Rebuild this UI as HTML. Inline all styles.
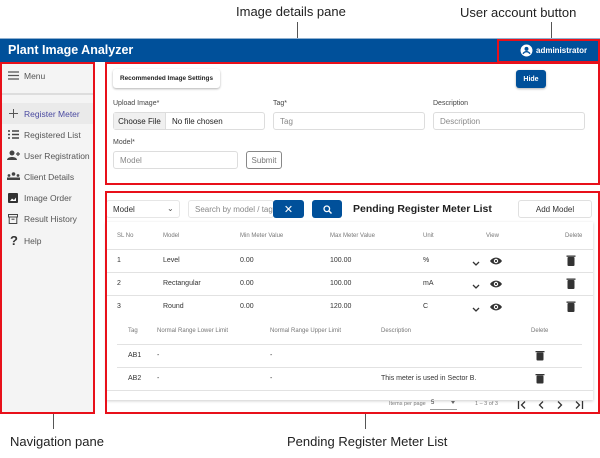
<!DOCTYPE html>
<html><head><meta charset="utf-8">
<style>
*{box-sizing:border-box;margin:0;padding:0}
body{width:600px;height:458px;background:#fff;font-family:"Liberation Sans",Arial,sans-serif;position:relative;overflow:hidden;color:#333}
.a{position:absolute}
.ann{position:absolute;font-size:13px;color:#222;white-space:nowrap}
.vl{position:absolute;width:1px;background:#555}
.red{position:absolute;border:2px solid #e8101a}
.t{position:absolute;font-size:7px;color:#333;white-space:nowrap}
.h{position:absolute;font-size:6px;color:#777;white-space:nowrap}
.nav{position:absolute;left:24px;font-size:8.5px;color:#555}
.inp{position:absolute;border:1px solid #ddd;border-radius:3px;background:#fff;font-size:8px;color:#888;padding-left:6px;display:flex;align-items:center}
.lbl{position:absolute;font-size:7px;color:#444}
.hr{position:absolute;height:1px;background:#e2e2e2}
.btn{position:absolute;border-radius:3px;display:flex;align-items:center;justify-content:center;font-size:7.5px}
</style></head><body>
<div class="ann" style="left:236px;top:4px">Image details pane</div>
<div class="ann" style="left:460px;top:5px">User account button</div>
<div class="vl" style="left:297px;top:22px;height:40px"></div>
<div class="vl" style="left:551px;top:22px;height:17px"></div>
<div class="a" style="left:0;top:38px;width:600px;height:1px;background:#8fb0d0"></div>
<div class="a" style="left:0;top:39px;width:600px;height:23px;background:#00509a"></div>
<div class="a" style="left:8px;top:43px;color:#fff;font-weight:bold;font-size:12.5px">Plant Image Analyzer</div>
<svg class="a" style="left:520px;top:44px" width="13" height="13" viewBox="0 0 24 24"><circle cx="12" cy="12" r="11" fill="#fff"/><circle cx="12" cy="9" r="3.6" fill="#00509a"/><path d="M5.5 18c2-3 4-3.8 6.5-3.8s4.5.8 6.5 3.8" stroke="#00509a" stroke-width="2.6" fill="none"/></svg>
<div class="a" style="left:536px;top:46px;color:#fff;font-weight:bold;font-size:8px">administrator</div>
<div class="red" style="left:497px;top:39px;width:103px;height:24px"></div>

<div class="a" style="left:0;top:62px;width:95px;height:351px;background:#f4f4f4"></div>
<div class="a" style="left:0;top:103px;width:93px;height:21px;background:#eaeaea"></div>
<div class="hr" style="left:2px;top:93px;width:91px;background:#ddd;height:2px"></div>
<svg class="a" style="left:8px;top:71px" width="11" height="9"><path d="M0 1h11M0 4.5h11M0 8h11" stroke="#555" stroke-width="1.3"/></svg>
<div class="nav" style="top:71px">Menu</div>
<svg class="a" style="left:9px;top:109px" width="9" height="9"><path d="M4.5 0v9M0 4.5h9" stroke="#555" stroke-width="1"/></svg>
<div class="nav" style="top:109px;color:#4a4aa0">Register Meter</div>
<svg class="a" style="left:8px;top:130px" width="11" height="9"><path d="M0 1h2M4 1h7M0 4.5h2M4 4.5h7M0 8h2M4 8h7" stroke="#444" stroke-width="1.4"/></svg>
<div class="nav" style="top:130px">Registered List</div>
<svg class="a" style="left:7px;top:150px" width="13" height="10"><circle cx="5" cy="3" r="2.5" fill="#444"/><path d="M0 10c0-4 10-4 10 0z" fill="#444"/><path d="M9 4h4M11 2v4" stroke="#444" stroke-width="1.2"/></svg>
<div class="nav" style="top:151px">User Registration</div>
<svg class="a" style="left:7px;top:172px" width="13" height="8"><circle cx="6.5" cy="2" r="1.8" fill="#444"/><circle cx="2" cy="3.5" r="1.4" fill="#444"/><circle cx="11" cy="3.5" r="1.4" fill="#444"/><rect x="0" y="5.5" width="13" height="2.5" fill="#444"/></svg>
<div class="nav" style="top:172px">Client Details</div>
<svg class="a" style="left:8px;top:193px" width="10" height="10"><rect width="10" height="10" rx="1" fill="#333"/><path d="M2 8l2-2.5 2 1.5 2-2.5v3.5z" fill="#fff"/></svg>
<div class="nav" style="top:193px">Image Order</div>
<svg class="a" style="left:8px;top:214px" width="10" height="10"><rect x="0.5" y="0.5" width="9" height="2.5" fill="none" stroke="#444"/><rect x="1.2" y="3" width="7.6" height="6.5" fill="none" stroke="#444"/><path d="M3.5 5.2h3" stroke="#444"/></svg>
<div class="nav" style="top:214px">Result History</div>
<div class="a" style="left:10px;top:233px;font-size:13px;font-weight:bold;color:#333">?</div>
<div class="nav" style="top:236px">Help</div>
<div class="red" style="left:0;top:62px;width:95px;height:352px"></div>
<div class="vl" style="left:53px;top:414px;height:15px"></div>
<div class="ann" style="left:10px;top:434px">Navigation pane</div>

<div class="btn" style="left:113px;top:69px;width:107px;height:19px;background:#fff;box-shadow:0 1px 2px rgba(0,0,0,.3);color:#222;font-weight:bold;font-size:6.4px">Recommended Image Settings</div>
<div class="btn" style="left:516px;top:70px;width:30px;height:18px;background:#00509a;color:#fff;font-weight:bold;font-size:7px;box-shadow:0 1px 2px rgba(0,0,0,.3)">Hide</div>
<div class="lbl" style="left:113px;top:100px">Upload Image*</div>
<div class="lbl" style="left:273px;top:100px">Tag*</div>
<div class="lbl" style="left:433px;top:100px">Description</div>
<div class="inp" style="left:113px;top:112px;width:152px;height:18px;padding:0;color:#222">
<div style="width:52px;height:100%;background:#f0f0f0;border-right:1px solid #ddd;display:flex;align-items:center;justify-content:center">Choose File</div><div style="padding-left:6px">No file chosen</div></div>
<div class="inp" style="left:273px;top:112px;width:152px;height:18px">Tag</div>
<div class="inp" style="left:433px;top:112px;width:152px;height:18px">Description</div>
<div class="lbl" style="left:113px;top:139px">Model*</div>
<div class="inp" style="left:113px;top:151px;width:125px;height:18px">Model</div>
<div class="btn" style="left:246px;top:151px;width:36px;height:18px;border:1px solid #888;color:#777;font-size:8px">Submit</div>
<div class="red" style="left:105px;top:62px;width:495px;height:123px"></div>

<div class="inp" style="left:106px;top:200px;width:74px;height:18px;color:#333;border-color:#e6e6e6">Model<span style="position:absolute;left:60px;top:3px;font-size:8px;color:#555">⌄</span></div>
<div class="inp" style="left:188px;top:200px;width:86px;height:18px;border-color:#e6e6e6">Search by model / tag</div>
<div class="btn" style="left:273px;top:200px;width:31px;height:18px;background:#00509a;color:#fff;font-size:11px">✕</div>
<div class="btn" style="left:312px;top:200px;width:30px;height:18px;background:#00509a"><svg width="9" height="9"><circle cx="3.8" cy="3.8" r="2.8" stroke="#fff" stroke-width="1.3" fill="none"/><path d="M6 6l2.5 2.5" stroke="#fff" stroke-width="1.4"/></svg></div>
<div class="a" style="left:353px;top:203px;font-weight:bold;font-size:10.5px;color:#222">Pending Register Meter List</div>
<div class="btn" style="left:518px;top:200px;width:74px;height:18px;border:1px solid #e0e0e0;color:#333;font-size:8px">Add Model</div>
<div class="a" style="left:106px;top:222px;width:487px;height:178px;box-shadow:0 1px 3px rgba(0,0,0,.2)"></div>

<div class="h" style="left:117px;top:233px">SL No</div>
<div class="h" style="left:163px;top:233px">Model</div>
<div class="h" style="left:240px;top:233px">Min Meter Value</div>
<div class="h" style="left:330px;top:233px">Max Meter Value</div>
<div class="h" style="left:423px;top:233px">Unit</div>
<div class="h" style="left:486px;top:233px">View</div>
<div class="h" style="left:565px;top:233px">Delete</div>
<div class="hr" style="left:106px;top:249px;width:487px"></div>
<div class="hr" style="left:106px;top:272px;width:487px"></div>
<div class="hr" style="left:106px;top:295px;width:487px"></div>

<div class="t" style="left:117px;top:257px">1</div><div class="t" style="left:163px;top:257px">Level</div><div class="t" style="left:240px;top:257px">0.00</div><div class="t" style="left:330px;top:257px">100.00</div><div class="t" style="left:423px;top:257px">%</div>
<div class="t" style="left:117px;top:280px">2</div><div class="t" style="left:163px;top:280px">Rectangular</div><div class="t" style="left:240px;top:280px">0.00</div><div class="t" style="left:330px;top:280px">100.00</div><div class="t" style="left:423px;top:280px">mA</div>
<div class="t" style="left:117px;top:303px">3</div><div class="t" style="left:163px;top:303px">Round</div><div class="t" style="left:240px;top:303px">0.00</div><div class="t" style="left:330px;top:303px">120.00</div><div class="t" style="left:423px;top:303px">C</div>

<svg class="a" style="left:470px;top:254px" width="140" height="60">
<g id="r"><path d="M3 8l3 3 3-3" stroke="#333" stroke-width="1.3" fill="none"/><path d="M20 7c3-4.5 9-4.5 12 0c-3 4.5-9 4.5-12 0z" fill="#333"/><circle cx="26" cy="7" r="2.2" fill="#fff"/><circle cx="26" cy="7" r="1.1" fill="#333"/><rect x="97.5" y="3" width="7" height="9" rx="1" fill="#333"/><rect x="96.5" y="1.5" width="9" height="1.3" fill="#333"/></g>
<use href="#r" y="23"/><use href="#r" y="46"/>
</svg>

<div class="h" style="left:128px;top:328px">Tag</div>
<div class="h" style="left:157px;top:328px">Normal Range Lower Limit</div>
<div class="h" style="left:270px;top:328px">Normal Range Upper Limit</div>
<div class="h" style="left:381px;top:328px">Description</div>
<div class="h" style="left:531px;top:328px">Delete</div>
<div class="hr" style="left:117px;top:344px;width:465px"></div>
<div class="hr" style="left:117px;top:367px;width:465px"></div>
<div class="hr" style="left:106px;top:390px;width:487px"></div>
<div class="t" style="left:128px;top:352px">AB1</div><div class="t" style="left:157px;top:352px">-</div><div class="t" style="left:270px;top:352px">-</div>
<div class="t" style="left:128px;top:375px">AB2</div><div class="t" style="left:157px;top:375px">-</div><div class="t" style="left:270px;top:375px">-</div><div class="t" style="left:381px;top:375px">This meter is used in Sector B.</div>
<svg class="a" style="left:535px;top:351px" width="10" height="35"><rect x="1.5" y="1.5" width="7" height="8" rx="1" fill="#333"/><rect x="0.5" y="0" width="9" height="1.3" fill="#333"/><rect x="1.5" y="24.5" width="7" height="8" rx="1" fill="#333"/><rect x="0.5" y="23" width="9" height="1.3" fill="#333"/></svg>

<div class="h" style="left:389px;top:401px;font-size:5.5px">Items per page</div>
<div class="t" style="left:431px;top:400px;font-size:6px">5</div>
<div class="hr" style="left:430px;top:409px;width:27px;background:#999"></div>
<div class="a" style="left:451px;top:401px;border:2.5px solid transparent;border-top:3px solid #666"></div>
<div class="h" style="left:475px;top:401px;font-size:5.5px">1 – 3 of 3</div>
<svg class="a" style="left:517px;top:400px" width="70" height="10"><g stroke="#333" stroke-width="1.3" fill="none"><path d="M1.5 1v8M8 1.5l-3.5 3.5 3.5 3.5"/><path d="M26 1.5l-3.5 3.5 3.5 3.5"/><path d="M41 1.5l3.5 3.5-3.5 3.5"/><path d="M59 1.5l3.5 3.5-3.5 3.5M65.5 1v8"/></g></svg>
<div class="red" style="left:105px;top:191px;width:495px;height:223px"></div>
<div class="vl" style="left:365px;top:414px;height:15px"></div>
<div class="ann" style="left:287px;top:434px">Pending Register Meter List</div>
</body></html>
